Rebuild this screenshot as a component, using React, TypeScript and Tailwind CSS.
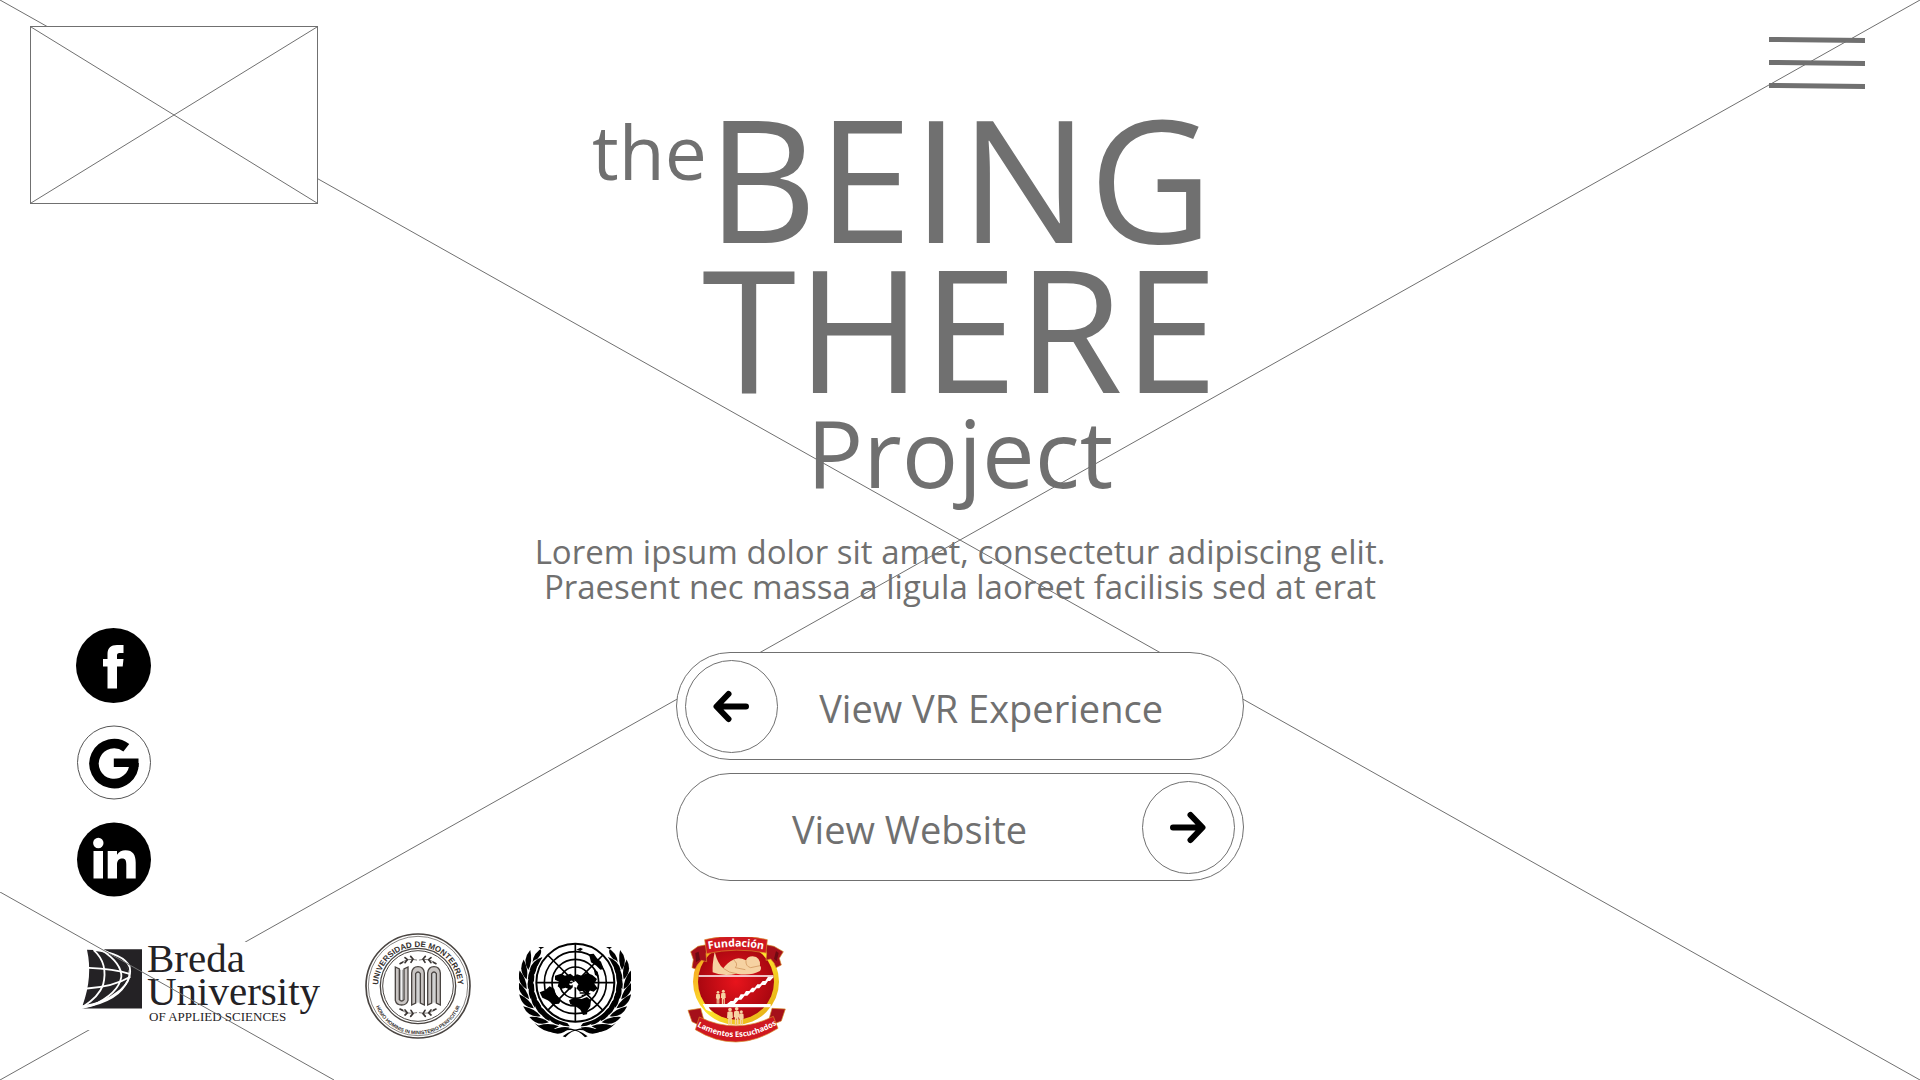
import React from "react";

function Backdrop() {
  return (
    <svg className="absolute inset-0 h-full w-full" stroke="#707070" strokeWidth="1" aria-hidden="true">
      <line x1="0" y1="0" x2="100%" y2="100%" />
      <line x1="100%" y1="0" x2="0" y2="100%" />
    </svg>
  );
}

function ImagePlaceholder() {
  return (
    <div className="ml-[30px] h-[178px] w-[288px] border border-[#707070] bg-white">
      <svg className="h-full w-full" stroke="#707070" strokeWidth="1" role="img" aria-label="Logo placeholder">
        <line x1="0" y1="0" x2="100%" y2="100%" />
        <line x1="100%" y1="0" x2="0" y2="100%" />
      </svg>
    </div>
  );
}

function FacebookIcon() {
  return (
    <svg viewBox="0 0 75 75" className="h-full w-full" aria-hidden="true">
      <circle cx="37.500" cy="37.500" r="37.500" fill="#000" />
      <path fill="#fff" d="M31.500 60.500V38.500H27V31H31.500V26C31.500 20 35 17 41 17H47.500V25H43.500C41.500 25 41 26 41 27.500V31H47.500L46.700 38.500H41V60.500Z" />
    </svg>
  );
}

function GoogleIcon() {
  return (
    <svg viewBox="0 0 75 75" className="h-full w-full" aria-hidden="true">
      <circle cx="38" cy="37.500" r="36.500" fill="#fff" stroke="#555" />
      <path d="M50.300 22.800A20 20 0 1 0 58 38.200" fill="none" stroke="#000" strokeWidth="9.500" />
      <path d="M37.800 33.500H62.500V42H37.800Z" fill="#000" />
    </svg>
  );
}

function LinkedinIcon() {
  return (
    <svg viewBox="0 0 75 75" className="h-full w-full" aria-hidden="true">
      <circle cx="38" cy="37.500" r="37" fill="#000" />
      <g fill="#fff">
        <circle cx="22.300" cy="21" r="5.200" />
        <path d="M17.500 29H27V56.500H17.500Z" />
        <path d="M31.700 29H41V32.700C43 29.700 46 28.300 49.500 28.300C57 28.300 59.700 33 59.700 40.500V56.500H50.300V42.500C50.300 38.500 49.300 36.500 46.300 36.500C42.500 36.500 41 39 41 43V56.500H31.700Z" />
      </g>
    </svg>
  );
}

function Arrow({ flip = false }: { flip?: boolean }) {
  return (
    <svg
      viewBox="0 0 36 30"
      className={flip ? "h-[34px] w-9 -scale-x-100" : "h-[34px] w-9"}
      fill="none"
      stroke="#000"
      strokeWidth="6"
      strokeLinecap="round"
      strokeLinejoin="round"
      aria-hidden="true"
    >
      <path d="M33 15.500H4M15.500 3L3.500 15.500L15.500 28" />
    </svg>
  );
}

function BredaLogo() {
  return (
    <div className="flex w-[237px] gap-[5px] bg-white pb-1 pl-0.5 font-['Liberation_Serif',serif] text-[#242225]">
      <svg viewBox="65 87 180 179" className="mt-[7px] h-[60px] w-[60px] shrink-0" aria-hidden="true">
        <path d="M130 87H245V265H65Q180 245 205 180Q220 130 130 87Z" fill="#242225" />
        <path d="M80 89Q160 90 195 130Q212 155 200 180Q170 240 67 255Q98 170 80 89Z" fill="#242225" />
        <g fill="none" stroke="#fff" strokeWidth="5.500">
          <path d="M100 89Q190 100 208 140Q216 180 180 210Q130 250 68 262" />
          <path d="M100 90Q145 130 128 195Q115 230 70 258" />
          <path d="M125 90Q185 130 183 170Q175 220 95 256" />
          <path d="M86 143Q160 145 210 162" />
          <path d="M80 205Q160 200 210 170" />
        </g>
      </svg>
      <p className="flex flex-col whitespace-nowrap text-[41px] leading-[33px]">
        <span>Breda</span>
        <span>University</span>
        <span className="pl-0.5 text-[13px] leading-[18px]">OF APPLIED SCIENCES</span>
      </p>
    </div>
  );
}

function Sprig() {
  return (
    <g fill="none" stroke="#3b3634" strokeWidth="5" strokeLinecap="round">
      <path d="M152 128Q175 112 200 119M256 128Q233 112 208 119" strokeWidth="2" />
      <path d="M150 130L158 126M165 112L172 118L165 127M182 108L189 116L183 126M258 130L250 126M243 112L236 118L243 127M226 108L219 116L225 126" />
    </g>
  );
}

function MonterreySeal() {
  return (
    <svg viewBox="45 38 318 318" className="h-[106px] w-[106px] shrink-0" role="img" aria-label="Universidad de Monterrey">
      <defs>
        <path id="udem-top" d="M85 215A120 120 0 1 1 323 215" />
        <path id="udem-bottom" d="M67 205A137 137 0 0 0 341 205" />
      </defs>
      <g fill="none" stroke="#4a4542">
        <circle cx="204" cy="197" r="156" strokeWidth="5" fill="#fff" />
        <circle cx="204" cy="197" r="149" strokeWidth="2" />
        <circle cx="204" cy="197" r="113" strokeWidth="4" />
        <circle cx="204" cy="197" r="106" strokeWidth="3" />
      </g>
      <g fill="#35302e" className="font-['Liberation_Sans',sans-serif] font-bold" textAnchor="middle">
        <text fontSize="24">
          <textPath href="#udem-top" startOffset="50%">UNIVERSIDAD DE MONTERREY</textPath>
        </text>
        <text fontSize="15">
          <textPath href="#udem-bottom" startOffset="50%">HOMO HOMINIS IN MINISTERIO PERFICITUR</textPath>
        </text>
      </g>
      <Sprig />
      <g transform="translate(0 396) scale(1 -1)">
        <Sprig />
      </g>
      <g fill="#c9c5c3" stroke="#4a4542" strokeWidth="4">
        <path d="M136 140L148 146V238Q155 246 162 238V146L174 140V240Q170 254 155 254Q139 254 136 240Z" />
        <path d="M185 254V158Q187 139 204 139Q221 139 223 158V254L211 248V160Q204 150 197 160V248Z" />
        <path d="M233 254V158Q235 139 252 139Q269 139 271 158V254L259 248V160Q252 150 245 160V248Z" />
      </g>
      <g fill="none" stroke="#777" strokeWidth="2">
        <path d="M152 148V240M158 148V240M201 158V247M207 158V247M249 158V247M255 158V247" />
      </g>
    </svg>
  );
}

const branch = [
  { x: 168, y: 303, a: -80 },
  { x: 138, y: 293, a: -65 },
  { x: 111, y: 276, a: -52 },
  { x: 91, y: 253, a: -38 },
  { x: 76, y: 226, a: -24 },
  { x: 68, y: 197, a: -10 },
  { x: 66, y: 167, a: 2 },
  { x: 71, y: 138, a: 14 },
  { x: 82, y: 112, a: 28 },
];

function LaurelBranch() {
  return (
    <g>
      {branch.map((leaf) => (
        <g key={leaf.x} transform={`translate(${leaf.x} ${leaf.y}) rotate(${leaf.a})`}>
          <path d="M0 26Q-32 8 -23 -30Q0 -4 0 26Z" />
          <path d="M4 26Q-4 -4 19 -28Q30 4 4 26Z" />
        </g>
      ))}
      <path d="M100 66Q119 78 96 103Q84 106 82 114Q84 82 118 66Q104 66 100 66Z" />
      <path d="M248 334Q205 300 150 312Q110 310 88 294Q125 333 175 318Q215 306 240 337Z" />
    </g>
  );
}

function UnitedNationsEmblem() {
  return (
    <svg viewBox="42 48 336 294" className="mt-2 h-[98px] w-28 shrink-0" role="img" aria-label="United Nations">
      <LaurelBranch />
      <g transform="translate(421 0) scale(-1 1)">
        <LaurelBranch />
      </g>
      <circle cx="211" cy="173" r="124" fill="#fff" />
      <g fill="none" stroke="#000" strokeWidth="5">
        <circle cx="211" cy="173" r="117" strokeWidth="6" />
        <circle cx="211" cy="173" r="93" />
        <circle cx="211" cy="173" r="70" />
        <circle cx="211" cy="173" r="47" />
        <path d="M211 56V290M94 173H328M128 90L294 256M294 90L128 256" />
      </g>
      <path d="M150 152L168 146L180 152L196 146L206 154L216 148L230 152L246 144L262 150L276 162L268 176L278 190L266 200L252 196L246 204L236 196L224 200L214 190L220 178L208 164L196 168L192 178L204 186L196 194L182 188L168 192L158 184L162 170L150 164Z" />
      <path d="M104 202L120 196L134 184L148 192L152 208L168 226L162 236L146 238L128 226L112 218Z" />
      <path d="M192 226L208 218L230 222L246 216L258 226L256 244L248 256L246 268L234 270L226 254L212 244L196 238Z" />
      <path d="M252 88L266 86L276 100L288 110L296 132L286 134L274 122L258 112ZM214 74L226 68L234 72L226 78ZM266 132L278 140L282 156L270 150Z" />
      <path d="M200 174L212 168L220 178L214 188L204 184Z" fill="#fff" />
      <path d="M224 204H252M230 212L256 206" stroke="#000" strokeWidth="4" />
    </svg>
  );
}

function Person({ x, y, s }: { x: number; y: number; s: number }) {
  return (
    <g transform={`translate(${x} ${y}) scale(${s})`}>
      <circle cx="0" cy="5" r="5" />
      <path d="M-7 12Q0 8 7 12L8 28H5V48H1V32H-1V48H-5V28H-8Z" />
    </g>
  );
}

function FundacionLogo() {
  return (
    <svg viewBox="27 36 348 318" className="mt-2 h-[106px] w-[116px] shrink-0" role="img" aria-label="Fundación Lamentos Escuchados">
      <defs>
        <radialGradient id="fund-red">
          <stop offset="0" stopColor="#e8141c" />
          <stop offset="1" stopColor="#a90710" />
        </radialGradient>
        <linearGradient id="fund-gold" x1="0" y1="0" x2="1" y2="1">
          <stop offset="0" stopColor="#f08c1a" />
          <stop offset="0.500" stopColor="#ffe62e" />
          <stop offset="1" stopColor="#e0a010" />
        </linearGradient>
        <path id="fund-top" d="M102 76Q198 54 294 76" />
        <path id="fund-bottom" d="M80 303Q198 371 322 298" />
      </defs>
      <circle cx="198" cy="170" r="129" fill="url(#fund-gold)" />
      <circle cx="198" cy="170" r="114" fill="url(#fund-red)" />
      <g fill="#f6d2a2">
        <path d="M134 80Q126 120 128 142Q160 156 200 146Q240 154 270 138Q276 128 270 122Q272 96 248 94Q232 94 228 106Q206 94 190 104Q172 112 160 130Q144 118 134 80Z" />
        <g fill="none" stroke="#c98a50" strokeWidth="2">
          <path d="M160 130Q176 144 200 146M190 104Q206 116 196 128L226 134M228 106Q226 124 242 128L270 122" />
        </g>
        <Person x={144} y={198} s={0.8} />
        <Person x={160} y={194} s={0.9} />
        <Person x={180} y={248} s={1.1} />
        <Person x={200} y={246} s={1.1} />
        <Person x={214} y={256} s={0.9} />
      </g>
      <path d="M86 151H310V155H86ZM98 237H302V247H116L126 262L108 254Z" fill="#fff" />
      <path d="M170 238L182 228H190L196 218H206L212 208H222L228 198H238L246 188H254L262 178H270L278 168H286L294 155H312L300 168H294L286 180H276L268 190H260L250 202H242L232 212H224L214 224H206L194 238Z" fill="#fff" />
      <g stroke="#d9902a" strokeWidth="2">
        <path d="M62 80L84 64L116 58L108 86L110 110L94 106L82 120L76 132L66 128L70 104Z" fill="#a5101a" />
        <path d="M340 80L312 64L282 58L290 86L288 106L302 102L312 114L318 128L334 120L328 100Z" fill="#a5101a" />
        <path d="M104 44Q198 22 292 44L288 84Q198 66 110 86Z" fill="#cf1820" />
        <path d="M54 256L92 250L102 286L86 300L66 290Z" fill="#a5101a" />
        <path d="M346 252L306 250L296 286L314 296L334 288Z" fill="#a5101a" />
        <path d="M88 276Q198 330 310 274L324 310Q198 390 76 314Z" fill="#cf1820" />
      </g>
      <path d="M76 84L86 80L90 104L78 112ZM318 78L326 84L320 108L312 102Z" fill="#6d0a12" />
      <g fill="#fff" className="font-['Noto_Sans',sans-serif] font-bold" textAnchor="middle">
        <text fontSize="32">
          <textPath href="#fund-top" startOffset="50%">Fundación</textPath>
        </text>
        <text fontSize="23">
          <textPath href="#fund-bottom" startOffset="50%">Lamentos Escuchados</textPath>
        </text>
      </g>
    </svg>
  );
}

const socials = [
  { name: "Facebook", Icon: FacebookIcon },
  { name: "Google", Icon: GoogleIcon },
  { name: "LinkedIn", Icon: LinkedinIcon },
];

export default function App() {
  return (
    <div className="relative flex min-h-screen flex-col overflow-hidden bg-white font-['Open_Sans',sans-serif] text-[#707070]">
      <Backdrop />

      <div className="relative grid grid-cols-[1fr_auto_1fr] pt-[26px]">
        <aside className="flex flex-col justify-between">
          <ImagePlaceholder />
          <nav aria-label="Social media" className="ml-[76px] flex flex-col gap-[22px]">
            {socials.map(({ name, Icon }) => (
              <a key={name} href="#" aria-label={name} className="block size-[75px] rounded-full">
                <Icon />
              </a>
            ))}
          </nav>
        </aside>

        <main className="flex flex-col items-center pt-[76px] pb-4">
          <h1 className="flex flex-col items-center">
            <span className="grid grid-cols-[1fr_auto_1fr] text-[171px] leading-[150px]">
              <span className="pt-1 text-right text-[75px] leading-[90px]">the</span>
              <span>BEING</span>
            </span>
            <span className="text-[171px] leading-[150px]">THERE</span>
            <span className="text-[94px] leading-[100px]">Project</span>
          </h1>
          <p className="mt-8 text-center text-[33px] leading-[35px]">
            Lorem ipsum dolor sit amet, consectetur adipiscing elit.
            <br />
            Praesent nec massa a ligula laoreet facilisis sed at erat
          </p>
          <div className="mt-12 flex w-[568px] flex-col gap-[13px] text-[38px]">
            <button type="button" className="flex h-[108px] items-center rounded-full border border-[#707070] bg-white pr-20 pl-2">
              <span className="flex size-[93px] items-center justify-center rounded-full border border-[#707070]">
                <Arrow />
              </span>
              <span className="grow pt-1 text-right">View VR Experience</span>
            </button>
            <button type="button" className="flex h-[108px] items-center rounded-full border border-[#707070] bg-white pr-2">
              <span className="grow pt-1 text-center">View Website</span>
              <span className="flex size-[93px] items-center justify-center rounded-full border border-[#707070]">
                <Arrow flip />
              </span>
            </button>
          </div>
        </main>

        <header className="flex items-start justify-end pr-[55px]">
          <button type="button" aria-label="Open menu" className="mt-[11px]">
            <svg viewBox="0 0 96 54" className="h-[54px] w-24" stroke="#707070" strokeWidth="5" aria-hidden="true">
              <path d="M0 2.500L96 3.500M0 25.500L96 26.500M0 48.500L96 49.500" />
            </svg>
          </button>
        </header>
      </div>

      <footer className="relative mt-8 flex items-center gap-12 pl-20">
        <BredaLogo />
        <MonterreySeal />
        <UnitedNationsEmblem />
        <FundacionLogo />
      </footer>

      <svg className="absolute bottom-0 left-0 h-[188px] w-[334px]" stroke="#707070" strokeWidth="1" aria-hidden="true">
        <line x1="0" y1="0" x2="100%" y2="100%" />
      </svg>
    </div>
  );
}
